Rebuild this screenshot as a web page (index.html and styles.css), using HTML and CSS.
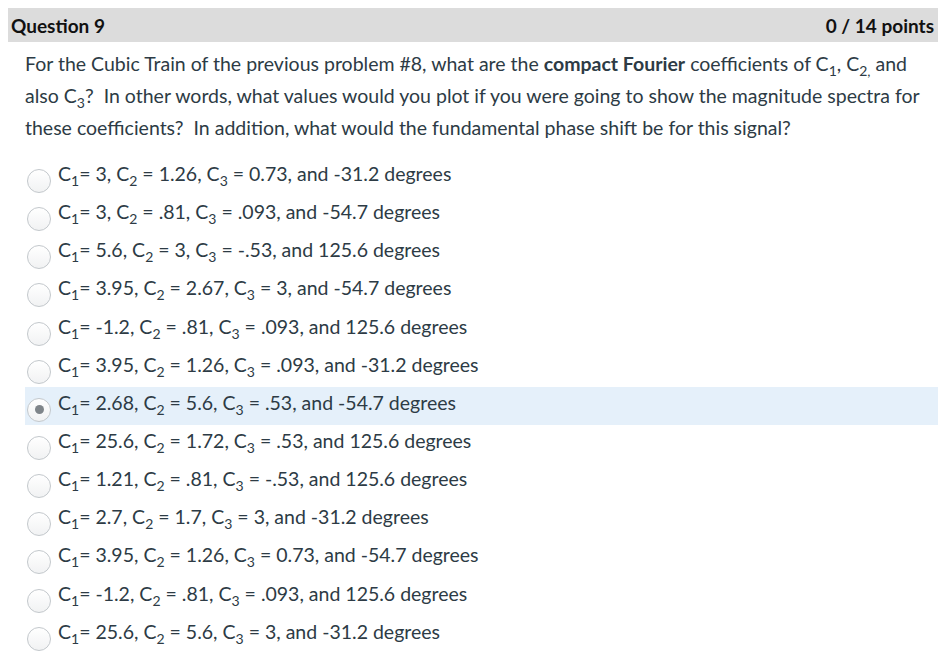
FILE: index.html
```html
<!DOCTYPE html>
<html lang="en">
<head>
<meta charset="utf-8">
<title>Question 9</title>
<link rel="stylesheet" href="styles.css">
</head>
<body>
<div class="question">
  <div class="q-header">
    <span class="q-title">Question 9</span>
    <span class="q-points">0 / 14 points</span>
  </div>
  <div class="q-body">
    <p class="q-text">For the Cubic Train of the previous problem #8, what are the <strong>compact Fourier</strong> coefficients of C<sub>1</sub>, C<sub>2,</sub> and also C<sub>3</sub>?&nbsp; In other words, what values would you plot if you were going to show the magnitude spectra for these coefficients?&nbsp; In addition, what would the fundamental phase shift be for this signal?</p>
    <ul class="answers">
      <li class="answer"><span class="radio"></span><span class="label">C<sub>1</sub>= 3, C<sub>2</sub> = 1.26, C<sub>3</sub> = 0.73, and -31.2 degrees</span></li>
      <li class="answer"><span class="radio"></span><span class="label">C<sub>1</sub>= 3, C<sub>2</sub> = .81, C<sub>3</sub> = .093, and -54.7 degrees</span></li>
      <li class="answer"><span class="radio"></span><span class="label">C<sub>1</sub>= 5.6, C<sub>2</sub> = 3, C<sub>3</sub> = -.53, and 125.6 degrees</span></li>
      <li class="answer"><span class="radio"></span><span class="label">C<sub>1</sub>= 3.95, C<sub>2</sub> = 2.67, C<sub>3</sub> = 3, and -54.7 degrees</span></li>
      <li class="answer"><span class="radio"></span><span class="label">C<sub>1</sub>= -1.2, C<sub>2</sub> = .81, C<sub>3</sub> = .093, and 125.6 degrees</span></li>
      <li class="answer"><span class="radio"></span><span class="label">C<sub>1</sub>= 3.95, C<sub>2</sub> = 1.26, C<sub>3</sub> = .093, and -31.2 degrees</span></li>
      <li class="answer selected"><span class="radio checked"></span><span class="label">C<sub>1</sub>= 2.68, C<sub>2</sub> = 5.6, C<sub>3</sub> = .53, and -54.7 degrees</span></li>
      <li class="answer"><span class="radio"></span><span class="label">C<sub>1</sub>= 25.6, C<sub>2</sub> = 1.72, C<sub>3</sub> = .53, and 125.6 degrees</span></li>
      <li class="answer"><span class="radio"></span><span class="label">C<sub>1</sub>= 1.21, C<sub>2</sub> = .81, C<sub>3</sub> = -.53, and 125.6 degrees</span></li>
      <li class="answer"><span class="radio"></span><span class="label">C<sub>1</sub>= 2.7, C<sub>2</sub> = 1.7, C<sub>3</sub> = 3, and -31.2 degrees</span></li>
      <li class="answer"><span class="radio"></span><span class="label">C<sub>1</sub>= 3.95, C<sub>2</sub> = 1.26, C<sub>3</sub> = 0.73, and -54.7 degrees</span></li>
      <li class="answer"><span class="radio"></span><span class="label">C<sub>1</sub>= -1.2, C<sub>2</sub> = .81, C<sub>3</sub> = .093, and 125.6 degrees</span></li>
      <li class="answer"><span class="radio"></span><span class="label">C<sub>1</sub>= 25.6, C<sub>2</sub> = 5.6, C<sub>3</sub> = 3, and -31.2 degrees</span></li>
    </ul>
  </div>
</div>
</body>
</html>
```

FILE: styles.css
```css
html, body {
  background: #ffffff;
}
body {
  margin: 8px;
  font-family: Lato, "Noto Sans", sans-serif;
  color: #2d3b45;
  overflow: hidden;
}
.q-header {
  height: 34px;
  background: #dcdcdc;
  display: flex;
  align-items: center;
  justify-content: space-between;
  padding: 0 4px 0 3px;
  font-weight: 700;
  font-size: 19px;
  color: #111111;
}
.q-body {
  padding-left: 17px;
}
.q-text {
  margin: 6px 0 14px 0;
  font-size: 19.5px;
  line-height: 32px;
}
.q-text strong {
  font-weight: 700;
}
sub {
  font-size: 14px;
  line-height: 0;
  vertical-align: -5px;
}
.answers {
  list-style: none;
  margin: 0;
  padding: 0;
}
.answer {
  display: flex;
  align-items: flex-start;
  height: 38.15px;
  font-size: 19.5px;
  line-height: 32px;
}
.answer.selected {
  background: #e5f0fa;
}
.radio {
  flex: none;
  width: 22px;
  height: 22px;
  margin: 11px 7px 0 2px;
  border: 1px solid #c3c8cc;
  border-radius: 50%;
  background: linear-gradient(#ffffff, #f1f2f3);
  display: flex;
  align-items: center;
  justify-content: center;
}
.radio.checked::after {
  content: "";
  width: 9px;
  height: 9px;
  border-radius: 50%;
  background: #7f858a;
}
.label {
  white-space: nowrap;
}
```
